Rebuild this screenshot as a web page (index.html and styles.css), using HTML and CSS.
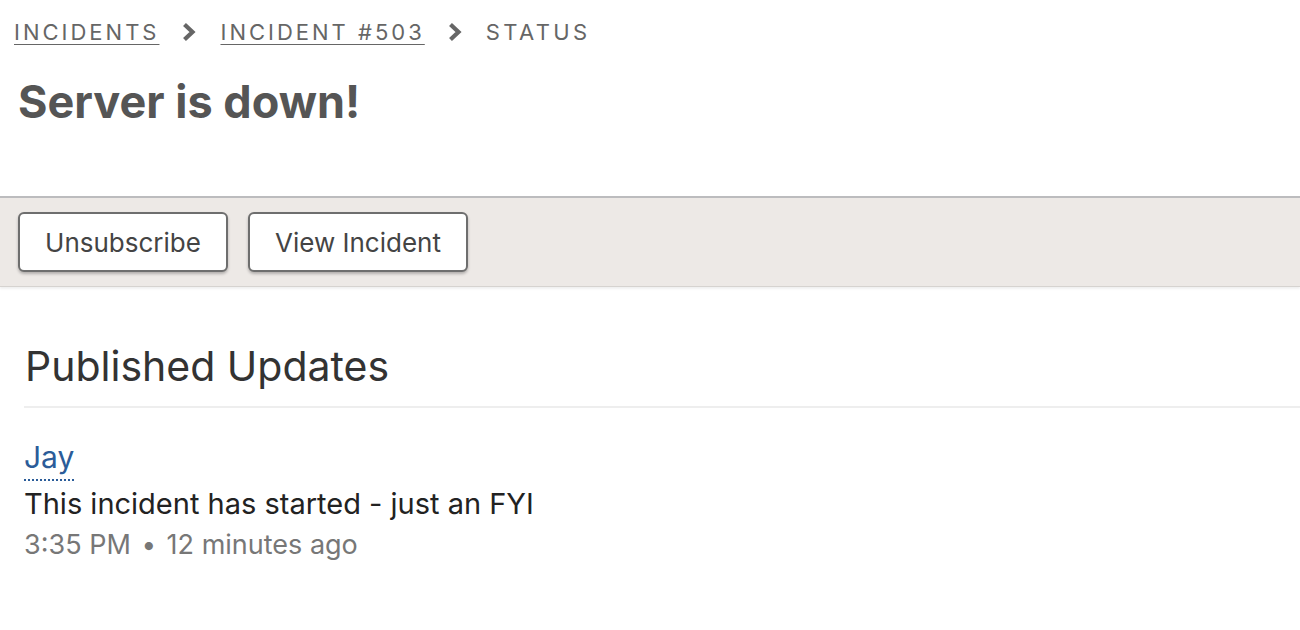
FILE: index.html
```html
<!DOCTYPE html>
<html>
<head>
<meta charset="utf-8">
<link rel="stylesheet" href="styles.css">
</head>
<body>
<header class="header">
  <nav class="crumbs">
    <a class="crumb-link" href="#">INCIDENTS</a>
    <svg class="chev" width="16" height="20" viewBox="0 0 16 20"><path d="M3.5 2.5 L11.5 10 L3.5 17.5" fill="none" stroke="#666" stroke-width="4.2"/></svg>
    <a class="crumb-link" href="#">INCIDENT #503</a>
    <svg class="chev" width="16" height="20" viewBox="0 0 16 20"><path d="M3.5 2.5 L11.5 10 L3.5 17.5" fill="none" stroke="#666" stroke-width="4.2"/></svg>
    <span class="crumb-current">STATUS</span>
  </nav>
  <h1 class="title">Server is down!</h1>
</header>
<div class="toolbar">
  <button class="btn btn-unsub">Unsubscribe</button>
  <button class="btn btn-view">View Incident</button>
</div>
<main class="content">
  <h2 class="section-title">Published Updates</h2>
  <div class="update">
    <a class="author" href="#">Jay</a>
    <p class="message">This incident has started - just an FYI</p>
    <p class="meta">3:35 PM <span class="dot">•</span> 12 minutes ago</p>
  </div>
</main>
</body>
</html>
```
FILE: styles.css
```css
html, body {
  margin: 0;
  padding: 0;
  background: #fff;
  font-family: "Inter", "Noto Sans", sans-serif;
}
.header {
  padding: 15px 0 0 14px;
  height: 196px;
  box-sizing: border-box;
}
.crumbs {
  display: flex;
  align-items: center;
  gap: 22px;
  font-size: 22px;
  letter-spacing: 3px;
  color: #666;
  height: 34px;
}
.crumb-link {
  color: #666;
  text-decoration: underline;
  text-underline-offset: 4px;
  text-decoration-thickness: 1px;
}
.chev {
  margin: 0 1px 0 0;
}
.crumb-current {
  color: #666;
  letter-spacing: 3.4px;
}
.title {
  margin: 30px 0 0 4px;
  font-size: 45px;
  font-weight: 700;
  color: #555;
  line-height: 1;
}
.toolbar {
  border-top: 2px solid #bcbcbe;
  border-bottom: 1px solid #d6d3d0;
  box-shadow: 0 2px 2px rgba(0,0,0,0.06);
  background: #ede9e6;
  height: 91px;
  box-sizing: border-box;
  display: flex;
  align-items: center;
  gap: 20px;
  padding: 0 0 0 18px;
}
.btn {
  font-family: "Inter", "Noto Sans", sans-serif;
  font-size: 26px;
  color: #444;
  background: #fff;
  border: 2px solid #6e6e6e;
  border-radius: 6px;
  height: 60px;
  padding: 0;
  box-shadow: 0 2px 3px rgba(0,0,0,0.25);
}
.btn-unsub { width: 210px; }
.btn-view { width: 220px; }
.content {
  padding: 0 0 0 24px;
}
.section-title {
  margin: 0;
  padding: 57px 0 17px 1px;
  font-size: 41px;
  font-weight: 400;
  color: #333;
  line-height: 1.1;
  border-bottom: 2px solid #eeeeee;
}
.update {
  padding-top: 31px;
}
.author {
  display: inline-block;
  font-size: 30px;
  color: #2b5c99;
  text-decoration: none;
  border-bottom: 2px dotted #2b5c99;
  line-height: 36px;
  padding-bottom: 4px;
}
.message {
  margin: 4px 0 0 0;
  font-size: 29px;
  color: #222;
  line-height: 38px;
}
.meta {
  margin: 3px 0 0 0;
  font-size: 27px;
  color: #777;
  line-height: 38px;
}
.dot {
  margin: 0 3px;
  font-size: 26px;
}
```
